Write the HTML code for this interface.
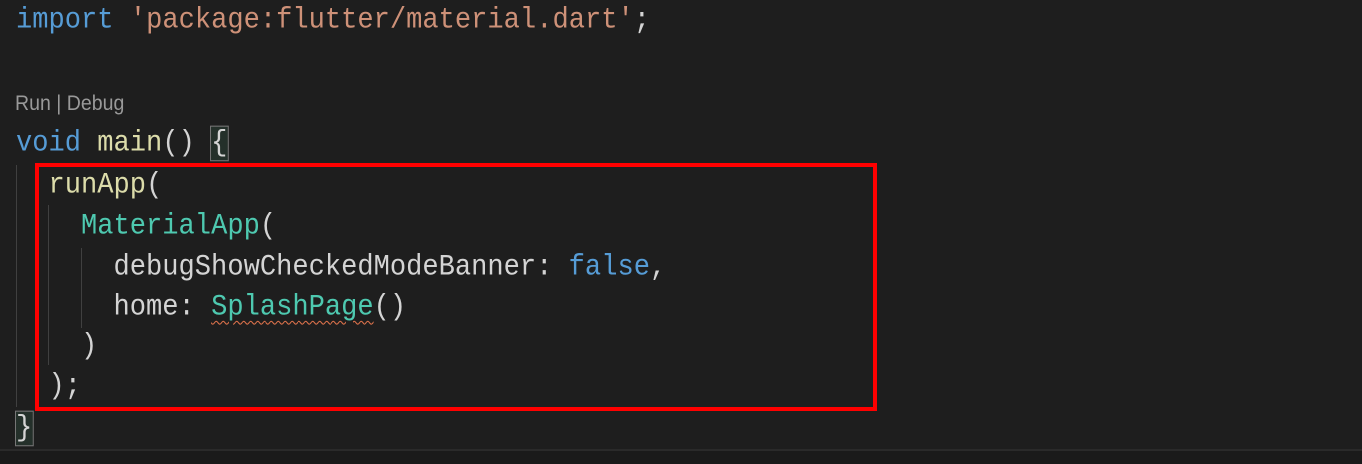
<!DOCTYPE html>
<html><head><style>
body{margin:0;width:1362px;height:464px;background:#1e1e1e;overflow:hidden;position:relative;font-family:"Liberation Mono",monospace;}
.l{position:absolute;left:16px;font-size:27.5px;line-height:40px;height:40px;white-space:pre;color:#d4d4d4;transform-origin:0 50%;transform:scale(0.985,1.08);}
.k{color:#569cd6}.s{color:#ce9178}.f{color:#dcdcaa}.c{color:#4ec9b0}
.g{position:absolute;width:1px;background:#404040}
.lens{position:absolute;left:15px;top:92px;font-family:"Liberation Sans",sans-serif;font-size:21px;color:#999;transform-origin:0 0;transform:scaleX(0.93);}
.sq{text-decoration:underline wavy #d9704a;text-decoration-thickness:1px;text-underline-offset:5px}
</style></head><body>
<div class="l" style="top:1px"><span class="k">import</span> <span class="s">'package:flutter/material.dart'</span>;</div>
<div class="lens">Run | Debug</div>
<div class="l" style="top:124px"><span class="k">void</span> <span class="f">main</span>() <span style="outline:1px solid #777;background:#24302a">{</span></div>
<div class="g" style="left:16px;top:165px;height:242px"></div>
<div class="g" style="left:48px;top:205px;height:160px"></div>
<div class="g" style="left:81px;top:248px;height:80px"></div>
<div class="l" style="top:166px">  <span class="f">runApp</span>(</div>
<div class="l" style="top:207px">    <span class="c">MaterialApp</span>(</div>
<div class="l" style="top:248px">      debugShowCheckedModeBanner: <span class="k">false</span>,</div>
<div class="l" style="top:288px">      home: <span class="c sq">SplashPage</span>()</div>
<div class="l" style="top:327px">    )</div>
<div class="l" style="top:367px">  );</div>
<div class="l" style="top:409px"><span style="outline:1px solid #777;background:#24302a">}</span></div>
<div style="position:absolute;left:35px;top:163px;width:834px;height:240px;border:4px solid #ff0000"></div>
<div style="position:absolute;left:0;top:449px;width:1362px;height:2px;background:#2a2a2a"></div>
<div style="position:absolute;left:0;top:451px;width:1362px;height:13px;background:#1a1a1a"></div>
</body></html>
